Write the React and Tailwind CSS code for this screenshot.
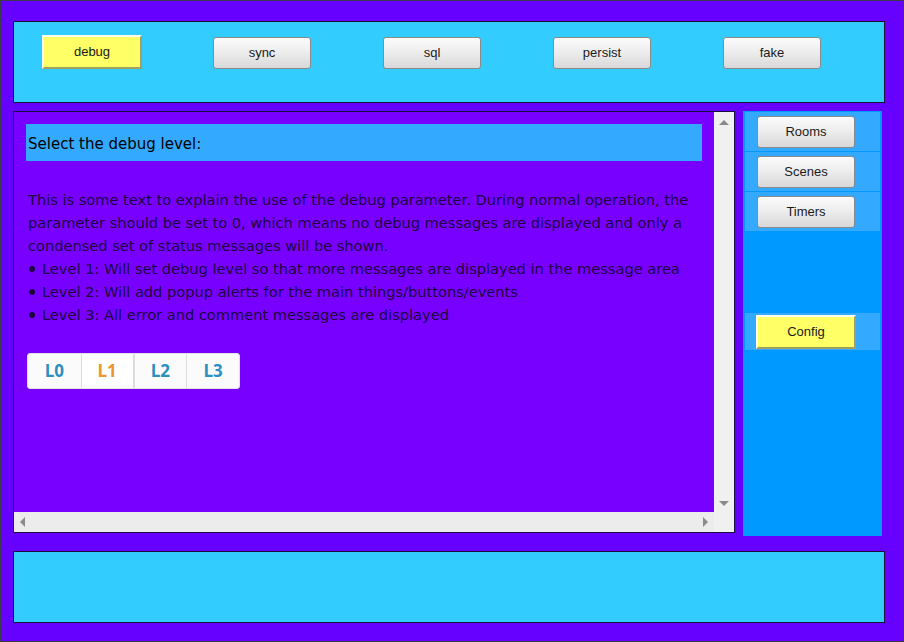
import React, { useState } from 'react';

const comic = { fontFamily: '"Comic Sans MS", "DejaVu Sans", sans-serif' };

function GrayButton({ label }) {
  return (
    <button className="w-[98px] h-[32px] rounded-[3px] border border-[#8a8a8a] bg-gradient-to-b from-[#fbfbfb] via-[#ececec] to-[#d8d8d8] text-[13px] text-[#1a1a1a] shadow-[inset_0_1px_0_#fff] font-['Liberation_Sans',Arial,sans-serif]">
      {label}
    </button>
  );
}

function YellowButton({ label, className = '' }) {
  return (
    <button
      className={`h-[34px] bg-[#ffff66] border-t-2 border-l-2 border-t-[#fffff0] border-l-[#fffff0] border-b-2 border-r-2 border-b-[#a0a060] border-r-[#a0a060] text-[13px] text-[#1a1a1a] font-['Liberation_Sans',Arial,sans-serif] ${className}`}
    >
      {label}
    </button>
  );
}

function Bullet({ children }) {
  return (
    <li className="flex items-start">
      <span className="w-[6px] h-[6px] rounded-full bg-[#1c0040] mt-[9px] ml-[1px] mr-[7px] shrink-0" />
      <span>{children}</span>
    </li>
  );
}

export default function App() {
  const [level, setLevel] = useState(1);
  const levels = ['L0', 'L1', 'L2', 'L3'];

  return (
    <div className="w-[904px] h-[642px] bg-[#6600ff] border border-[#3a3a4a] flex flex-col pt-[20px] px-[12px]">
      {/* top bar */}
      <div className="h-[82px] w-[872px] bg-[#33ccff] border border-[#1a1040] flex items-start pt-[13px] pl-[28px]">
        <YellowButton label="debug" className="w-[100px]" />
        <div className="flex items-center gap-[72px] ml-[71px] mt-[2px]">
          <GrayButton label="sync" />
          <GrayButton label="sql" />
          <GrayButton label="persist" />
          <GrayButton label="fake" />
        </div>
      </div>

      {/* middle */}
      <div className="flex mt-[8px] h-[425px] gap-[8px]">
        <div className="w-[722px] h-[422px] border border-[#1a1040] bg-[#f0f0f0] flex flex-col">
          <div className="flex flex-1 min-h-0">
            <div className="flex-1 bg-[#7700ff] pt-[12px] px-[12px]" style={comic}>
              <div className="h-[37px] bg-[#33aaff] flex items-center pl-[2px] pt-[3px] text-[15px] text-black">
                Select the debug level:
              </div>
              <div className="mt-[27px] text-[14.6px] leading-[23px] text-[#1c0040] pl-[2px] mr-[-12px]">
                <p>
                  This is some text to explain the use of the debug parameter. During normal operation, the
                  parameter should be set to 0, which means no debug messages are displayed and only a
                  condensed set of status messages will be shown.
                </p>
                <ul>
                  <Bullet>Level 1: Will set debug level so that more messages are displayed in the message area</Bullet>
                  <Bullet>Level 2: Will add popup alerts for the main things/buttons/events</Bullet>
                  <Bullet>Level 3: All error and comment messages are displayed</Bullet>
                </ul>
              </div>
              <div className="mt-[27px] ml-[1px] flex w-[213px] h-[36px] bg-[#fbfbfb] rounded-[3px] border border-[#e2e2e2] overflow-hidden">
                {levels.map((l, i) => (
                  <button
                    key={l}
                    onClick={() => setLevel(i)}
                    className={`w-[53px] h-full flex items-center justify-center text-[17px] font-bold font-['Open_Sans',sans-serif] ${
                      i === level
                        ? 'text-[#ee9430] bg-white border-x border-[#f5d9a8]'
                        : 'text-[#2b8fc0] border-l border-[#dedede] first:border-l-0'
                    }`}
                  >
                    {l}
                  </button>
                ))}
              </div>
            </div>
            {/* vertical scrollbar */}
            <div className="w-[20px] bg-[#f0f0f0] flex flex-col items-center justify-between pt-[8px] pb-[6px]">
              <div className="w-0 h-0 border-x-[5px] border-x-transparent border-b-[5px] border-b-[#8a8a8a]" />
              <div className="w-0 h-0 border-x-[5px] border-x-transparent border-t-[5px] border-t-[#8a8a8a]" />
            </div>
          </div>
          {/* horizontal scrollbar */}
          <div className="h-[20px] flex">
            <div className="flex-1 bg-[#ececec] flex items-center justify-between px-[6px]">
              <div className="w-0 h-0 border-y-[5px] border-y-transparent border-r-[5px] border-r-[#8a8a8a]" />
              <div className="w-0 h-0 border-y-[5px] border-y-transparent border-l-[5px] border-l-[#8a8a8a]" />
            </div>
            <div className="w-[20px] bg-[#f0f0f0]" />
          </div>
        </div>

        {/* right nav */}
        <div className="w-[139px] h-[425px] bg-[#0099ff] pt-[1px] px-[2px] flex flex-col">
          {['Rooms', 'Scenes', 'Timers'].map((n) => (
            <div key={n} className="h-[39px] mb-[1px] bg-[#33aaff] flex items-center pl-[12px]">
              <GrayButton label={n} />
            </div>
          ))}
          <div className="h-[37px] mt-[81px] bg-[#33aaff] flex items-center pl-[11px]">
            <YellowButton label="Config" className="w-[100px]" />
          </div>
        </div>
      </div>

      {/* bottom bar */}
      <div className="mt-[15px] h-[72px] w-[872px] bg-[#33ccff] border border-[#1a1040]" />
    </div>
  );
}
